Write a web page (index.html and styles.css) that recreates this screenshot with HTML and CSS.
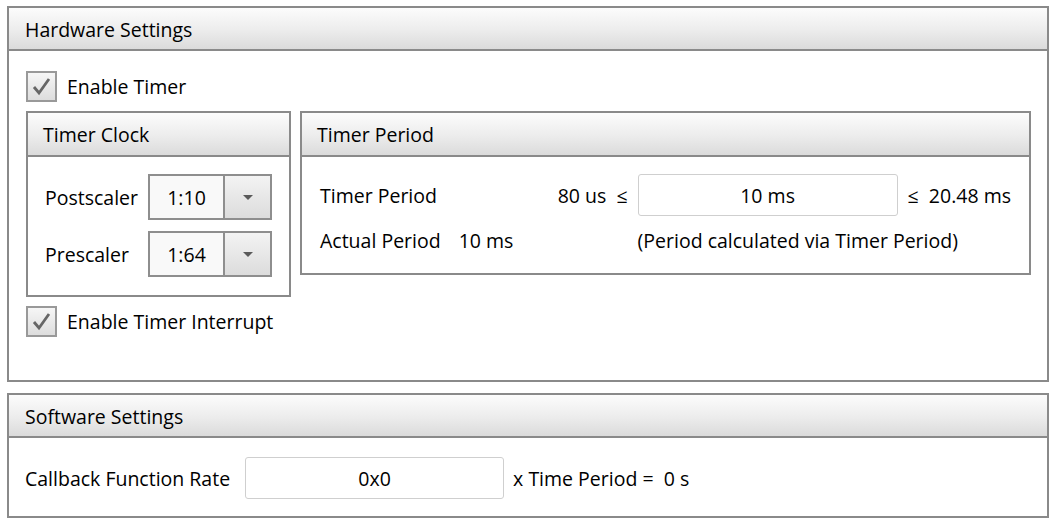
FILE: index.html
```html
<!DOCTYPE html>
<html>
<head>
<meta charset="utf-8">
<link rel="stylesheet" href="styles.css">
</head>
<body>
  <section class="panel hw">
    <div class="panel-header">Hardware Settings</div>
    <div class="hw-body">
      <label class="check">
        <span class="box"><svg viewBox="0 0 31 31" width="31" height="31"><path d="M8 16 L13 22 L23 8" fill="none" stroke="#666" stroke-width="2.8" stroke-linejoin="miter"/></svg></span>
        <span>Enable Timer</span>
      </label>
      <div class="groups">
        <div class="group clock">
          <div class="group-header">Timer Clock</div>
          <div class="clock-body">
            <div class="clock-row">
              <span class="lbl">Postscaler</span>
              <div class="combo"><span class="combo-val">1:10</span><span class="combo-btn"><span class="arrow"></span></span></div>
            </div>
            <div class="clock-row">
              <span class="lbl">Prescaler</span>
              <div class="combo"><span class="combo-val">1:64</span><span class="combo-btn"><span class="arrow"></span></span></div>
            </div>
          </div>
        </div>
        <div class="group period">
          <div class="group-header">Timer Period</div>
          <div class="period-body">
            <div class="cell-split"><span>Timer Period</span><span>80 us&nbsp;&nbsp;≤</span></div>
            <div class="field">10 ms</div>
            <div class="max">≤&nbsp; 20.48 ms</div>
            <div class="actual"><span>Actual Period</span><span class="actual-val">10 ms</span></div>
            <div class="note">(Period calculated via Timer Period)</div>
          </div>
        </div>
      </div>
      <label class="check">
        <span class="box"><svg viewBox="0 0 31 31" width="31" height="31"><path d="M8 16 L13 22 L23 8" fill="none" stroke="#666" stroke-width="2.8" stroke-linejoin="miter"/></svg></span>
        <span>Enable Timer Interrupt</span>
      </label>
    </div>
  </section>
  <section class="panel sw">
    <div class="panel-header">Software Settings</div>
    <div class="sw-body">
      <span>Callback Function Rate</span>
      <div class="field sw-field">0x0</div>
      <span>x Time Period =&nbsp; 0 s</span>
    </div>
  </section>
</body>
</html>
```

FILE: styles.css
```css
html, body {
  margin: 0;
  background: #ffffff;
}
body {
  padding: 6px 11px 0 7px;
  font-family: "Open Sans", "Noto Sans", sans-serif;
  font-size: 19.5px;
  color: #000000;
  display: flex;
  flex-direction: column;
  gap: 11px;
}
.panel {
  border: 2px solid #8a8a8a;
  background: #fff;
}
.panel-header {
  height: 40px;
  display: flex;
  align-items: center;
  padding-left: 16px;
  padding-top: 1px;
  background: linear-gradient(#fcfcfc, #ececec 55%, #dbdbdb);
  border-bottom: 2px solid #8a8a8a;
}
.hw {
  height: 372px;
}
.hw-body {
  padding: 20px 16px 0 17px;
  display: flex;
  flex-direction: column;
  gap: 9px;
  align-items: flex-start;
}
.check {
  display: flex;
  align-items: center;
  gap: 10px;
  height: 31px;
}
.box {
  width: 31px;
  height: 31px;
  box-sizing: border-box;
  border: 2px solid #999999;
  background: linear-gradient(#f6f6f6, #dddddd);
  display: block;
  position: relative;
}
.box svg {
  position: absolute;
  left: -2px;
  top: -2px;
}
.groups {
  display: flex;
  gap: 9px;
  align-items: flex-start;
  align-self: stretch;
}
.group {
  border: 2px solid #8a8a8a;
}
.group-header {
  height: 42px;
  display: flex;
  align-items: center;
  padding-left: 15px;
  background: linear-gradient(#fcfcfc, #ececec 55%, #dbdbdb);
  border-bottom: 2px solid #8a8a8a;
}
.clock {
  width: 261px;
}
.clock-body {
  padding: 17px 17px 18px 17px;
  display: flex;
  flex-direction: column;
  gap: 11px;
}
.clock-row {
  display: flex;
  align-items: center;
  justify-content: space-between;
}
.combo {
  display: flex;
  height: 46px;
  width: 124px;
  box-sizing: border-box;
  border: 2px solid #8e8e8e;
}
.combo-val {
  width: 73px;
  background: #f9f9f9;
  border-right: 2px solid #8e8e8e;
  display: flex;
  align-items: center;
  justify-content: center;
}
.combo-btn {
  flex: 1;
  background: linear-gradient(#f3f3f3, #dcdcdc);
  display: flex;
  align-items: center;
  justify-content: center;
}
.arrow {
  width: 0;
  height: 0;
  border-left: 5px solid transparent;
  border-right: 5px solid transparent;
  border-top: 5px solid #5a5a5a;
}
.period {
  flex: 1;
}
.period-body {
  padding: 17px 18px 19px 18px;
  display: grid;
  grid-template-columns: 1fr 260px auto;
  column-gap: 10px;
  row-gap: 12px;
  align-items: center;
}
.cell-split {
  display: flex;
  justify-content: space-between;
}
.field {
  height: 42px;
  box-sizing: border-box;
  border: 1px solid #cfcfcf;
  border-radius: 3px;
  display: flex;
  align-items: center;
  justify-content: center;
  background: #fff;
}
.actual {
  display: flex;
  gap: 18px;
  line-height: 26px;
}
.note {
  grid-column: 2 / 4;
  line-height: 26px;
}
.sw-body {
  padding: 19px 16px 17px 16px;
  display: flex;
  align-items: center;
  gap: 9px;
}
.sw-field {
  width: 259px;
  margin-left: 6px;
}
```
